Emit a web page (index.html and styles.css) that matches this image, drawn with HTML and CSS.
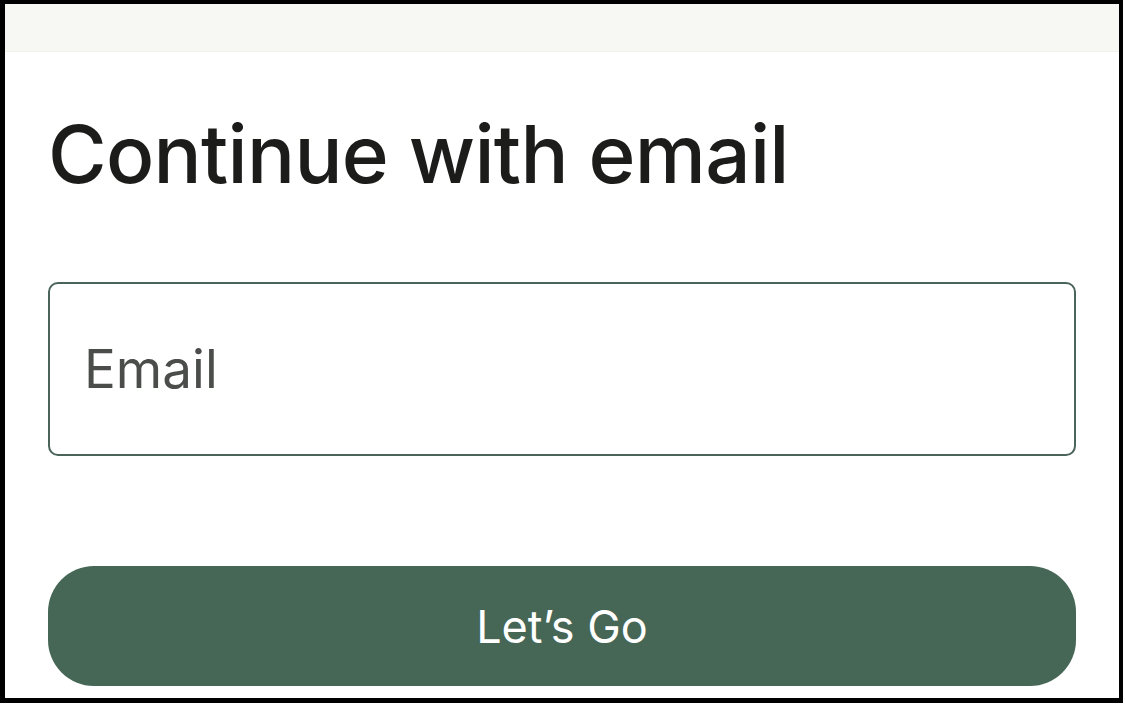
FILE: index.html
```html
<!DOCTYPE html>
<html lang="en">

<head>
    <meta charset="UTF-8">
    <meta name="viewport" content="width=device-width, initial-scale=1.0">
    <title>Continue with email</title>
    <link rel="stylesheet" href="styles.css">
</head>

<body>

<div class="frame">
    <!-- Top bar -->
    <div class="top-bar"></div>

    <!-- Email form -->
    <form class="email-form" onsubmit="return false;">
        <h1>Continue with email</h1>
        <input class="email-input" type="email" placeholder="Email">
        <button class="go-btn" type="submit">Let’s Go</button>
    </form>
</div>

</body>
</html>
```

FILE: styles.css
```css
/* General Styles */
body {
    margin: 0;
    font-family: Inter, "Noto Sans", Arial, sans-serif;
    background-color: #ffffff;
}

.frame {
    box-sizing: border-box;
    width: 1123px;
    height: 703px;
    border-style: solid;
    border-color: #000000;
    border-width: 4px 4px 5px 5px;
    background-color: #ffffff;
    overflow: hidden;
}

/* Top Bar */
.top-bar {
    height: 47px;
    background-color: #f7f8f3;
    border-bottom: 1px solid #f1f2ec;
}

/* Form */
.email-form {
    display: flex;
    flex-direction: column;
    padding: 0 43px;
}

.email-form h1 {
    margin: 54px 0 0 0;
    font-size: 80px;
    line-height: 96px;
    font-weight: 500;
    letter-spacing: -0.7px;
    color: #1c1d1a;
}

.email-input {
    box-sizing: border-box;
    margin-top: 80px;
    height: 174px;
    width: 100%;
    padding: 0 0 0 34px;
    border: 2px solid #4a6459;
    border-radius: 10px;
    font-family: inherit;
    font-size: 53px;
    color: #1c1d1a;
    outline: none;
}

.email-input::placeholder {
    color: #4a4d4a;
}

.go-btn {
    margin-top: 110px;
    height: 120px;
    width: 100%;
    border: none;
    border-radius: 46px;
    background-color: #466656;
    color: #ffffff;
    font-family: inherit;
    font-size: 45px;
    cursor: pointer;
}
```
